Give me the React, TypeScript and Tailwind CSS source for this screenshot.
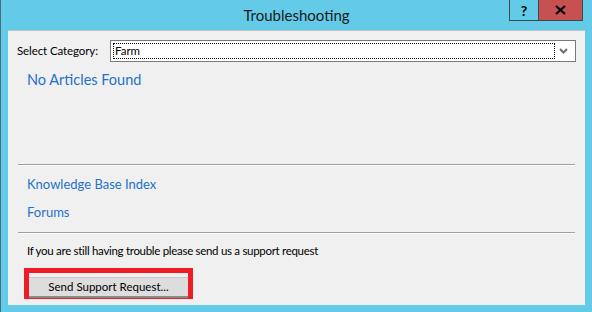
import React from "react";

const ui = { fontFamily: 'Lato, "Open Sans", Arial, sans-serif' };

const Separator: React.FC = () => (
  <div className="mx-[10px] border-t border-t-[#a0a0a0] border-b border-b-white" />
);

const App: React.FC = () => {
  return (
    <div className="w-[592px] h-[312px] bg-[#63cbe8] border-l border-l-[#41707f] flex flex-col" style={ui}>
      {/* title bar */}
      <div className="h-[30px] grid grid-cols-[1fr_auto_1fr] shrink-0">
        <div />
        <div className="pt-[5px] text-[15px] leading-[20px] text-[#1a1a1a]">Troubleshooting</div>
        <div className="flex justify-end items-start pr-[9px]">
          <div className="flex h-[21px] border border-[#3c4a50] border-t-0">
            <div className="w-[28px] flex items-center justify-center text-[14px] font-bold text-black">?</div>
            <div className="w-[44px] bg-[#c75050] border-l border-l-[#3c4a50] flex items-center justify-center">
              <svg width="11" height="10" viewBox="0 0 11 10">
                <path d="M1 1 L10 9 M10 1 L1 9" stroke="#000" strokeWidth="2.2" />
              </svg>
            </div>
          </div>
        </div>
      </div>

      {/* client area */}
      <div className="mx-[7px] h-[275px] shrink-0 bg-[#f0f0f0] border-t border-t-[#b8c4c8] flex flex-col">
        <div className="shrink-0 flex items-center pl-[9px] pr-[9px] pt-[9px]">
          <span className="w-[93px] text-[11.5px] tracking-[-0.1px] text-black">Select Category:</span>
          <div className="flex-1 h-[22px] bg-white border border-[#7a7a7a] flex items-center pl-[2px] pr-[3px]">
            <div className="flex-1 h-[16px] border border-dotted border-black flex items-center pl-[1px] text-[11.5px] leading-[14px] text-black">
              Farm
            </div>
            <div className="w-[17px] flex justify-center">
              <svg width="9" height="6" viewBox="0 0 9 6">
                <path d="M1 1 L4.5 4.5 L8 1" stroke="#6d6d6d" strokeWidth="2" fill="none" />
              </svg>
            </div>
          </div>
        </div>

        <div className="shrink-0 pl-[19px] pt-[8px] h-[102px] text-[14.5px] leading-[20px] text-[#1e72c8]">No Articles Found</div>

        <Separator />

        <div className="shrink-0 pl-[19px] pt-[10px] text-[13px] leading-[16px] text-[#1e72c8]">Knowledge Base Index</div>
        <div className="shrink-0 pl-[19px] pt-[12px] text-[13px] leading-[16px] text-[#1e72c8]">Forums</div>

        <div className="shrink-0 pt-[12px]">
          <Separator />
        </div>

        <div className="shrink-0 pl-[19px] pt-[9px] text-[11.5px] tracking-[-0.3px] leading-[16px] text-black">
          If you are still having trouble please send us a support request
        </div>

        <div className="shrink-0 pl-[16px] pt-[9px]">
          <div className="w-[169px] h-[31px] border-[5px] border-[#ee1c25]">
            <button className="w-full h-full bg-[#dddddd] border-t border-t-[#c8c8c8] border-b-2 border-b-[#8a8a8a] text-[11.5px] text-black leading-[14px]">
              Send Support Request...
            </button>
          </div>
        </div>
      </div>
    </div>
  );
};

export default App;
